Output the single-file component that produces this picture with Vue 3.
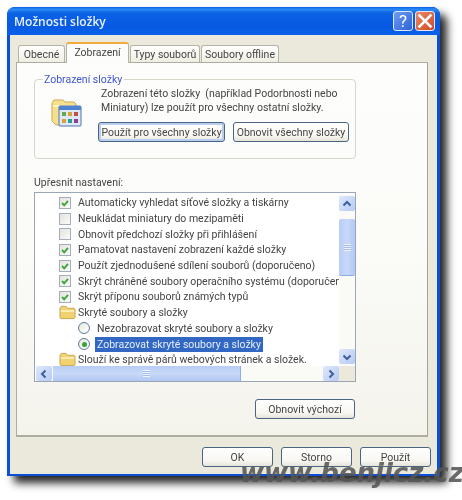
<script setup>
const tabs = [
  { label: 'Obecné', width: 47 },
  { label: 'Zobrazení', width: 63, active: true },
  { label: 'Typy souborů', width: 70 },
  { label: 'Soubory offline', width: 78 },
]

const rows = [
  { id: 1, kind: 'check', on: true, text: 'Automaticky vyhledat síťové složky a tiskárny' },
  { id: 2, kind: 'check', on: false, text: 'Neukládat miniatury do mezipaměti' },
  { id: 3, kind: 'check', on: false, text: 'Obnovit předchozí složky při přihlášení' },
  { id: 4, kind: 'check', on: true, text: 'Pamatovat nastavení zobrazení každé složky' },
  { id: 5, kind: 'check', on: true, text: 'Použít zjednodušené sdílení souborů (doporučeno)' },
  { id: 6, kind: 'check', on: true, text: 'Skrýt chráněné soubory operačního systému (doporučeno)' },
  { id: 7, kind: 'check', on: true, text: 'Skrýt příponu souborů známých typů' },
  { id: 8, kind: 'folder', text: 'Skryté soubory a složky' },
  { id: 9, kind: 'radio', on: false, text: 'Nezobrazovat skryté soubory a složky' },
  { id: 10, kind: 'radio', on: true, selected: true, text: 'Zobrazovat skryté soubory a složky' },
  { id: 11, kind: 'folder', text: 'Slouží ke správě párů webových stránek a složek.' },
]
</script>

<template>
  <div class="page">
    <div class="window">
      <div class="titlebar">
        <span class="title">Možnosti složky</span>
        <div class="caption-buttons">
          <span class="cap cap--help">?</span>
          <span class="cap cap--close">
            <svg viewBox="0 0 20 20" width="18" height="18">
              <path d="M4 4l12 12M16 4L4 16" stroke="#fff" stroke-width="3" stroke-linecap="square" />
            </svg>
          </span>
        </div>
      </div>

      <div class="client">
        <div class="tabs">
          <div
            v-for="tab in tabs"
            :key="tab.label"
            class="tab"
            :class="{ 'tab--active': tab.active }"
            :style="{ width: tab.width + 'px' }"
          >
            {{ tab.label }}
          </div>
        </div>

        <div class="tab-page">
          <div class="group">
            <span class="group__legend">Zobrazení složky</span>
            <svg class="group__icon" viewBox="0 0 32 32" width="32" height="32">
              <path d="M2 6l2-3h9l2 2h9l2 2v16l-5 5H6l-4-4z" fill="#f6e08e" stroke="#c9ab55" />
              <path d="M3 9h21" stroke="#fff3c0" stroke-width="2" />
              <rect x="9" y="9" width="22" height="20" rx="1" fill="#dfe8f6" stroke="#4c74ab" />
              <rect x="9" y="9" width="22" height="4" fill="#4f83cf" />
              <rect x="12" y="15" width="4" height="4" fill="#6aa84f" />
              <rect x="18" y="15" width="4" height="4" fill="#d6a23a" />
              <rect x="24" y="15" width="4" height="4" fill="#c0504d" />
              <rect x="12" y="22" width="4" height="4" fill="#d6a23a" />
              <rect x="18" y="22" width="4" height="4" fill="#2a9d8f" />
              <rect x="24" y="22" width="4" height="4" fill="#8e3f8f" />
            </svg>
            <div class="group__body">
              <p class="group__text">
                Zobrazení této složky&nbsp; (například Podorbnosti nebo<br />
                Miniatury) lze použít pro všechny ostatní složky.
              </p>
              <div class="group__buttons">
                <button type="button" class="btn btn--default btn--apply">Použít pro všechny složky</button>
                <button type="button" class="btn btn--reset">Obnovit všechny složky</button>
              </div>
            </div>
          </div>

          <div class="list-label">Upřesnit nastavení:</div>

          <div class="list">
            <div class="list__rows">
              <div v-for="row in rows" :key="row.id" class="row">
                <span v-if="row.kind === 'check'" class="check">
                  <svg v-if="row.on" viewBox="0 0 10 10" width="10" height="10">
                    <path d="M2 5l2.2 2.3L8 2.8" fill="none" stroke="#3ea53e" stroke-width="1.9" />
                  </svg>
                </span>
                <svg v-else-if="row.kind === 'folder'" class="folder" viewBox="0 0 18 15" width="17" height="15">
                  <path d="M1 3l1.5-2h5L9 3h7l1 1v9l-1 1H2l-1-1z" fill="#f0d272" stroke="#b8963e" stroke-width=".8" />
                  <path d="M2 5h14v2H2z" fill="#fbeeb4" />
                </svg>
                <span v-else class="radio" :class="{ 'radio--on': row.on }"></span>
                <span class="row__text" :class="{ 'row__text--selected': row.selected }">{{ row.text }}</span>
              </div>
            </div>

            <div class="vscroll">
              <span class="sb-btn"><svg viewBox="0 0 10 10" width="10" height="10"><path d="M1.5 6.5L5 3l3.5 3.5" fill="none" stroke="#3f5f9c" stroke-width="2" /></svg></span>
              <div class="vscroll__track"><div class="vscroll__thumb"><span class="grip"></span></div></div>
              <span class="sb-btn"><svg viewBox="0 0 10 10" width="10" height="10"><path d="M1.5 3.5L5 7l3.5-3.5" fill="none" stroke="#3f5f9c" stroke-width="2" /></svg></span>
            </div>

            <div class="hscroll">
              <span class="sb-btn"><svg viewBox="0 0 10 10" width="10" height="10"><path d="M6.5 1.5L3 5l3.5 3.5" fill="none" stroke="#3f5f9c" stroke-width="2" /></svg></span>
              <div class="hscroll__track"><div class="hscroll__thumb"><span class="grip"></span></div></div>
              <span class="sb-btn"><svg viewBox="0 0 10 10" width="10" height="10"><path d="M3.5 1.5L7 5 3.5 8.5" fill="none" stroke="#3f5f9c" stroke-width="2" /></svg></span>
            </div>
            <div class="corner"></div>
          </div>

          <div class="restore">
            <button type="button" class="btn btn--restore">Obnovit výchozí</button>
          </div>
        </div>

        <div class="actions">
          <button type="button" class="btn btn--action">OK</button>
          <button type="button" class="btn btn--action">Storno</button>
          <button type="button" class="btn btn--action">Použít</button>
        </div>
      </div>
    </div>
    <div class="watermark">www.benjicz.cz</div>
  </div>
</template>

<style>
html,
body {
  background: #fff;
}
</style>

<style scoped>
.page {
  position: relative;
  width: 462px;
  height: 500px;
  padding: 7px 0 0 7px;
  box-sizing: border-box;
  overflow: hidden;
  background: #fff;
  font-family: Roboto, 'Liberation Sans', sans-serif;
  font-size: 10.5px;
  color: #444;
  filter: blur(0.4px);
}

.window {
  width: 433px;
  height: 469px;
  display: flex;
  flex-direction: column;
  box-sizing: border-box;
  padding: 0 3px 2px;
  border-radius: 8px 8px 0 0;
  background: #0a4fd6;
  box-shadow: 7px 7px 8px rgba(0, 0, 0, 0.85);
}

.titlebar {
  height: 28px;
  margin: 0 -3px;
  padding: 0 5px 0 7px;
  flex: 0 0 auto;
  display: flex;
  align-items: center;
  justify-content: space-between;
  border-radius: 8px 8px 0 0;
  background: linear-gradient(180deg, #0a5fe6 0%, #2c8cf4 8%, #0b62e4 22%, #0759e2 70%, #0a62ea 100%);
}

.title {
  color: #e8f0ff;
  font-family: 'Open Sans', sans-serif;
  font-weight: 600;
  font-size: 12px;
}

.caption-buttons {
  display: flex;
  gap: 2px;
}

.cap {
  width: 20px;
  height: 20px;
  box-sizing: border-box;
  display: flex;
  align-items: center;
  justify-content: center;
  border: 1px solid #dfe9fb;
  border-radius: 3px;
  color: #fff;
}

.cap--help {
  background: linear-gradient(135deg, #6f9cf0, #2e62d8);
  font-size: 17px;
}

.cap--close {
  background: linear-gradient(135deg, #e98a66, #cf4a25);
}

.client {
  flex: 1;
  display: flex;
  flex-direction: column;
  background: #ebe9dc;
}

.tabs {
  display: flex;
  align-items: flex-end;
  height: 20px;
  margin: 7px 0 0 8px;
  gap: 1px;
}

.tab {
  position: relative;
  height: 17px;
  box-sizing: border-box;
  display: flex;
  align-items: center;
  justify-content: center;
  background: linear-gradient(180deg, #fff, #f0eee3);
  border: 1px solid #b5b4a6;
  border-bottom: none;
  border-radius: 3px 3px 0 0;
  white-space: nowrap;
}

.tab--active {
  height: 21px;
  margin-bottom: -1px;
  padding-bottom: 2px;
  z-index: 1;
  background: #fcfcfa;
  border-color: #b5b4a6;
  border-top: 2px solid #f3a93c;
}

.tab-page {
  width: 412px;
  height: 375px;
  margin-left: 6px;
  padding: 16px 0 0 17px;
  box-sizing: border-box;
  border: 1px solid #aeada2;
  border-right-color: #a5a499;
  border-bottom-width: 2px;
  background: linear-gradient(180deg, #fdfdfc 0%, #fbfbf8 50%, #f4f3ec 100%);
}

.group {
  position: relative;
  width: 322px;
  height: 80px;
  box-sizing: border-box;
  display: flex;
  border: 1px solid #d8d6c8;
  border-radius: 4px;
}

.group__legend {
  position: absolute;
  top: -7px;
  left: 8px;
  padding: 0 2px 0 1px;
  background: #fdfdfc;
  color: #3f55cf;
  line-height: 14px;
}

.group__icon {
  flex: 0 0 auto;
  margin: 17px 0 0 15px;
}

.group__body {
  margin-left: 16px;
}

.group__text {
  margin: 7px 0 0 3px;
  line-height: 14px;
  white-space: nowrap;
}

.group__buttons {
  display: flex;
  gap: 8px;
  margin-top: 7px;
}

.btn {
  height: 20px;
  padding: 0;
  box-sizing: border-box;
  font: inherit;
  color: #444;
  white-space: nowrap;
  border: 1px solid #4a6584;
  border-radius: 3px;
  background: linear-gradient(180deg, #fff 0%, #f8f7f2 70%, #e6e4d9 100%);
}

.btn--default {
  box-shadow: inset 0 0 0 2px #b8cdf0;
}

.btn--apply {
  width: 127px;
}

.btn--reset {
  width: 116px;
}

.list-label {
  margin-top: 17px;
  line-height: 14px;
}

.list {
  width: 322px;
  height: 190px;
  margin-top: 2px;
  box-sizing: border-box;
  display: grid;
  grid-template-columns: 303px 1fr;
  grid-template-rows: 172px 1fr;
  padding: 1px;
  border: 1px solid #9aa5b5;
  background: #fff;
}

.list__rows {
  overflow: hidden;
  padding-top: 1px;
}

.row {
  height: 15.7px;
  display: flex;
  align-items: center;
  padding-left: 23px;
  white-space: nowrap;
}

.check {
  width: 10px;
  height: 10px;
  flex: 0 0 auto;
  margin-right: 5px;
  border: 1px solid #a3adbb;
  background: linear-gradient(135deg, #e4e3dc, #fbfbf8);
  display: block;
}

.check svg {
  display: block;
}

.folder {
  flex: 0 0 auto;
}

.radio {
  position: relative;
  width: 12px;
  height: 12px;
  flex: 0 0 auto;
  margin: 0 5px 0 19px;
  box-sizing: border-box;
  border: 1px solid #5d7b98;
  border-radius: 50%;
  background: linear-gradient(135deg, #e8e8e0, #fff);
}

.radio--on::after {
  content: '';
  position: absolute;
  top: 2.5px;
  left: 2.5px;
  width: 5px;
  height: 5px;
  border-radius: 50%;
  background: #35a335;
}

.row__text {
  padding: 0 2px;
  line-height: 15px;
}

.row__text--selected {
  background: #3268c4;
  color: #e6edfa;
}

.vscroll {
  display: flex;
  flex-direction: column;
  padding: 2px 0;
  box-sizing: border-box;
  background: #fafaf6;
}

.vscroll__track {
  flex: 1;
  padding-top: 8px;
}

.vscroll__thumb {
  height: 56px;
  display: flex;
  align-items: center;
  justify-content: center;
  border-bottom: 1px solid #8fabe4;
  border-radius: 2px;
  background: linear-gradient(90deg, #b8cdf6, #c8d8f8 50%, #b2c8f4);
}

.hscroll {
  display: flex;
  align-items: stretch;
  min-width: 0;
  background: #fafaf6;
}

.hscroll__track {
  flex: 1;
  min-width: 0;
}

.hscroll__thumb {
  width: 187px;
  height: 100%;
  margin-left: 1px;
  display: flex;
  align-items: center;
  justify-content: center;
  border-right: 1px solid #8fabe4;
  background: linear-gradient(180deg, #b8cdf6, #c8d8f8 50%, #b2c8f4);
}

.sb-btn {
  width: 16px;
  height: 15px;
  flex: 0 0 auto;
  display: flex;
  align-items: center;
  justify-content: center;
  border-radius: 2px;
  background: linear-gradient(135deg, #dfe8fb, #b5caf3);
}

.grip {
  width: 7px;
  height: 7px;
  background: repeating-linear-gradient(180deg, #eef3fd 0 1px, #a6bdea 1px 2px);
}

.corner {
  background: #ebe9dc;
}

.restore {
  width: 321px;
  display: flex;
  justify-content: flex-end;
  margin-top: 17px;
}

.btn--restore {
  width: 100px;
}

.actions {
  display: flex;
  justify-content: flex-end;
  gap: 8px;
  margin-top: 10px;
  padding-right: 6px;
}

.btn--action {
  width: 71px;
}

.watermark {
  position: absolute;
  left: 240px;
  top: 458px;
  color: rgba(85, 85, 85, 0.88);
  font-family: 'DejaVu Sans', sans-serif;
  font-weight: 700;
  font-style: italic;
  font-size: 26px;
  line-height: 30px;
  white-space: nowrap;
  filter: blur(0.7px);
}
</style>
